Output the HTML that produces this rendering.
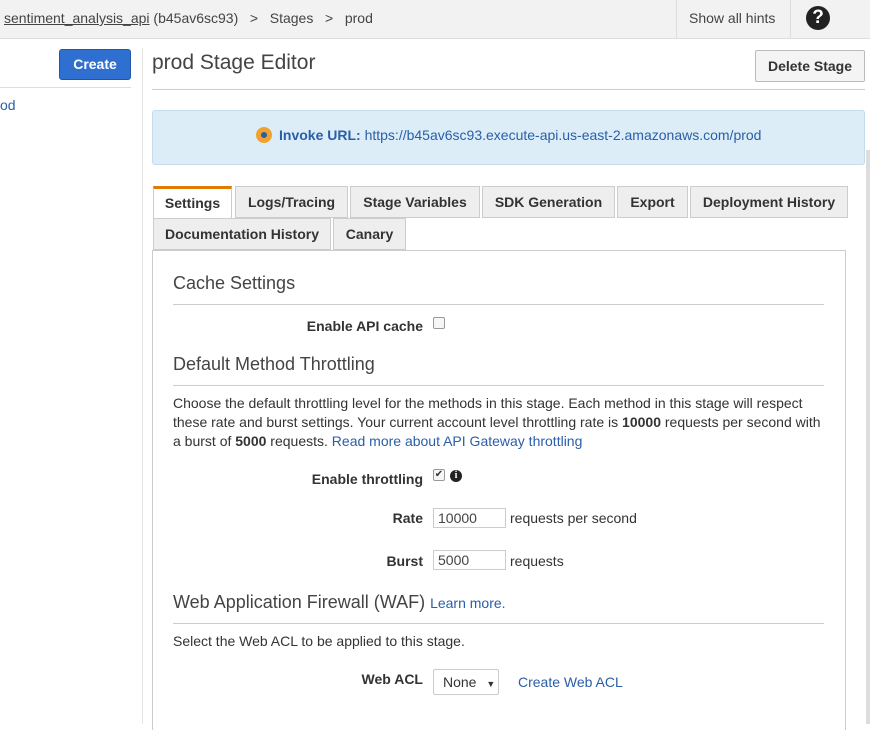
<!DOCTYPE html>
<html><head><style>
*{box-sizing:border-box;margin:0;padding:0}
body{width:870px;height:724px;overflow:hidden;background:#fff;font-family:"Liberation Sans",Arial,sans-serif;font-size:14px;color:#333;position:relative}
.abs{position:absolute}
.top{left:0;top:0;width:870px;height:39px;background:#f2f2f2;border-bottom:1px solid #ddd}
a{color:#2a5ea8;text-decoration:none}
.tab{position:absolute;height:32px;background:#eee;border:1px solid #ccc;font-weight:bold;font-size:14px;color:#333;text-align:center;line-height:31px}
h2{font-weight:normal;font-size:18px;color:#444}
.hr{height:1px;background:#ccc}
.lbl{font-weight:bold;text-align:right;width:200px}
.inp{border:1px solid #ccc;height:20px;width:73px;padding-left:4px;font-size:14px;line-height:18px;color:#444}
.cb{width:12px;height:12px;border:1px solid #999;border-radius:2px;background:#f6f6f6}
</style></head><body>
<div class="abs top"></div>
<div class="abs" style="left:4px;top:10px;color:#444"><span style="text-decoration:underline">sentiment_analysis_api</span> (b45av6sc93) &nbsp;&nbsp;&gt;&nbsp;&nbsp; Stages &nbsp;&nbsp;&gt;&nbsp;&nbsp; prod</div>
<div class="abs" style="left:676px;top:0;width:1px;height:39px;background:#ddd"></div>
<div class="abs" style="left:689px;top:10px;color:#444">Show all hints</div>
<div class="abs" style="left:790px;top:0;width:1px;height:39px;background:#ddd"></div>
<div class="abs" style="left:806px;top:6px;width:24px;height:24px;border-radius:50%;background:#222;color:#fff;font-weight:bold;font-size:19px;text-align:center;line-height:24px">?</div>

<div class="abs" style="left:59px;top:49px;width:72px;height:31px;background:#2f6fd0;border:1px solid #1d56ab;border-radius:3px;color:#fff;font-weight:bold;text-align:center;line-height:29px">Create</div>
<div class="abs" style="left:0;top:87px;width:131px;height:1px;background:#ddd"></div>
<div class="abs" style="left:0;top:97px;color:#2a5ea8">od</div>
<div class="abs" style="left:142px;top:48px;width:1px;height:676px;background:#e4e4e4"></div>

<div class="abs" style="left:152px;top:51px;font-size:21px;color:#444">prod Stage Editor</div>
<div class="abs" style="left:755px;top:50px;width:110px;height:32px;background:#f4f4f4;border:1px solid #bbb;border-radius:2px;font-weight:bold;text-align:center;line-height:30px;color:#333">Delete Stage</div>
<div class="abs" style="left:152px;top:89px;width:713px;height:1px;background:#ccc"></div>

<div class="abs" style="left:152px;top:110px;width:713px;height:55px;background:#dcedf8;border:1px solid #c5dcec;border-radius:3px"></div>
<div class="abs" style="left:256px;top:127px;width:16px;height:16px;border-radius:50%;background:#f0a22e"><div style="margin:5px;width:6px;height:6px;border-radius:50%;background:#2a5ea8"></div></div>
<div class="abs" style="left:279px;top:127px"><b style="color:#2a5ea8">Invoke URL:</b> <a>https://b45av6sc93.execute-api.us-east-2.amazonaws.com/prod</a></div>

<div class="tab" style="left:153px;top:186px;width:79px;background:#fff;border-top:3px solid #e07b00;border-bottom:none;line-height:28px">Settings</div>
<div class="tab" style="left:235px;top:186px;width:113px">Logs/Tracing</div>
<div class="tab" style="left:350px;top:186px;width:130px">Stage Variables</div>
<div class="tab" style="left:482px;top:186px;width:133px">SDK Generation</div>
<div class="tab" style="left:617px;top:186px;width:71px">Export</div>
<div class="tab" style="left:690px;top:186px;width:158px">Deployment History</div>
<div class="tab" style="left:153px;top:218px;width:178px">Documentation History</div>
<div class="tab" style="left:333px;top:218px;width:73px">Canary</div>

<div class="abs" style="left:152px;top:250px;width:694px;height:480px;border:1px solid #ccc;border-bottom:none"></div>
<div class="abs" style="left:866px;top:150px;width:4px;height:574px;background:#ddd"></div>

<h2 class="abs" style="left:173px;top:273px">Cache Settings</h2>
<div class="abs hr" style="left:173px;top:304px;width:651px"></div>
<div class="abs lbl" style="left:223px;top:318px">Enable API cache</div>
<div class="abs cb" style="left:433px;top:317px"></div>
<h2 class="abs" style="left:173px;top:354px">Default Method Throttling</h2>
<div class="abs hr" style="left:173px;top:385px;width:651px"></div>
<div class="abs" style="left:173px;top:394px;width:651px;line-height:19px">Choose the default throttling level for the methods in this stage. Each method in this stage will respect these rate and burst settings. Your current account level throttling rate is <b>10000</b> requests per second with a burst of <b>5000</b> requests. <a>Read more about API Gateway throttling</a></div>
<div class="abs lbl" style="left:223px;top:471px">Enable throttling</div>
<div class="abs cb" style="left:433px;top:469px;font-size:10px;line-height:10px;text-align:center">✔</div>
<div class="abs" style="left:450px;top:470px;width:12px;height:12px;border-radius:50%;background:#222;color:#fff;font-size:10px;font-weight:bold;text-align:center;line-height:12px;font-family:'Liberation Serif',serif">i</div>
<div class="abs lbl" style="left:223px;top:510px">Rate</div>
<div class="abs inp" style="left:433px;top:508px">10000</div>
<div class="abs" style="left:510px;top:510px">requests per second</div>
<div class="abs lbl" style="left:223px;top:553px">Burst</div>
<div class="abs inp" style="left:433px;top:550px">5000</div>
<div class="abs" style="left:510px;top:553px">requests</div>
<h2 class="abs" style="left:173px;top:592px">Web Application Firewall (WAF) <a style="font-size:14px">Learn more.</a></h2>
<div class="abs hr" style="left:173px;top:623px;width:651px"></div>
<div class="abs" style="left:173px;top:633px">Select the Web ACL to be applied to this stage.</div>
<div class="abs lbl" style="left:223px;top:671px">Web ACL</div>
<div class="abs" style="left:433px;top:669px;width:66px;height:26px;border:1px solid #ccc;border-radius:2px;padding-left:9px;line-height:24px">None <span style="font-size:9px;margin-left:6px">▼</span></div>
<div class="abs" style="left:518px;top:674px"><a>Create Web ACL</a></div>
</body></html>
